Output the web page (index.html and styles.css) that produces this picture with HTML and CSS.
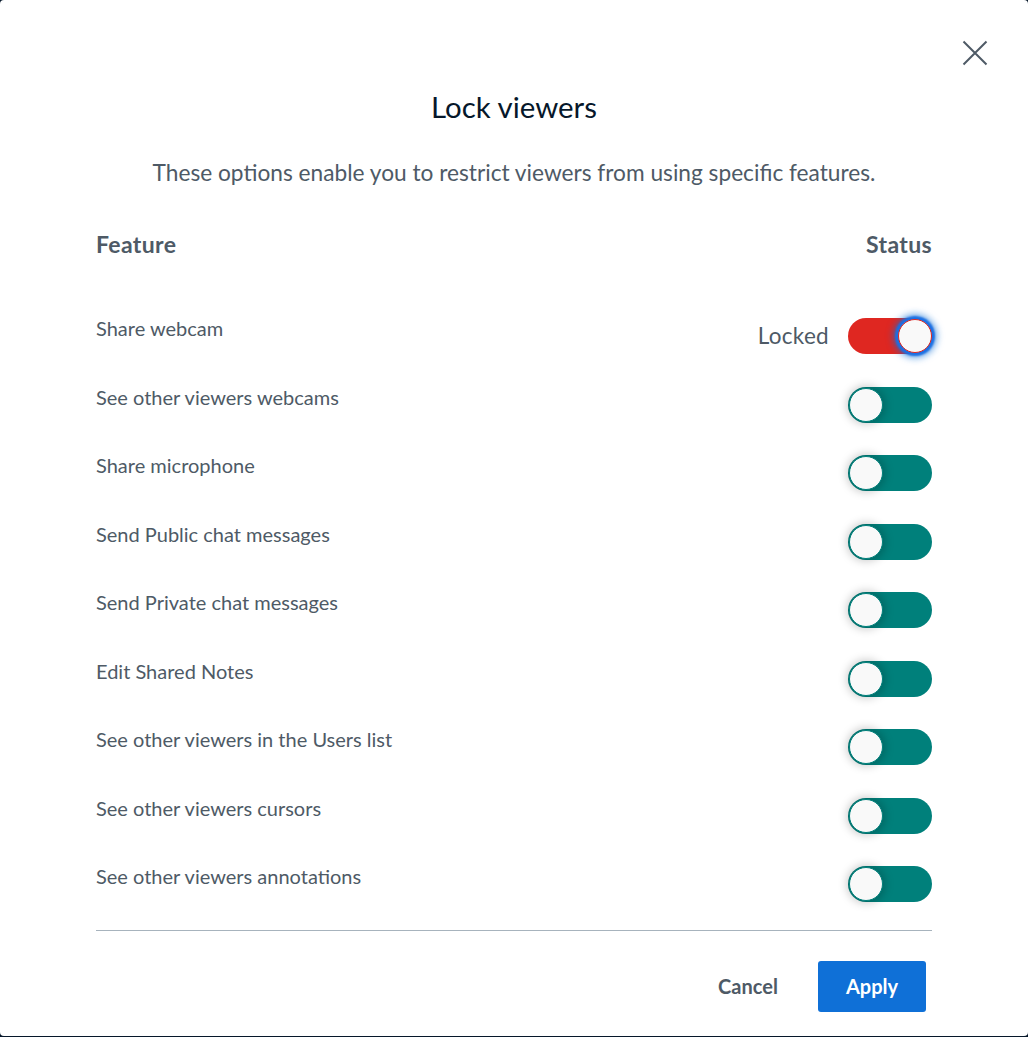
FILE: index.html
```html
<!DOCTYPE html>
<html lang="en">
<head>
<meta charset="utf-8">
<title>Lock viewers</title>
<link rel="stylesheet" href="styles.css">
</head>
<body>
<div class="modal" role="dialog" aria-labelledby="title">
  <button class="close" aria-label="Close">
    <svg width="26" height="26" viewBox="0 0 26 26" aria-hidden="true">
      <path d="M1.5 1.5 L24.5 24.5 M24.5 1.5 L1.5 24.5" stroke="#4e5a66" stroke-width="2" fill="none" stroke-linecap="butt"/>
    </svg>
  </button>
  <h1 class="title" id="title">Lock viewers</h1>
  <p class="subtitle">These options enable you to restrict viewers from using specific features.</p>

  <div class="table">
    <div class="head">
      <span>Feature</span>
      <span>Status</span>
    </div>
    <div class="row">
      <span class="label">Share webcam</span>
      <span class="status"><span class="state">Locked</span><span class="toggle on"><span class="knob"></span></span></span>
    </div>
    <div class="row">
      <span class="label">See other viewers webcams</span>
      <span class="status"><span class="toggle"><span class="knob"></span></span></span>
    </div>
    <div class="row">
      <span class="label">Share microphone</span>
      <span class="status"><span class="toggle"><span class="knob"></span></span></span>
    </div>
    <div class="row">
      <span class="label">Send Public chat messages</span>
      <span class="status"><span class="toggle"><span class="knob"></span></span></span>
    </div>
    <div class="row">
      <span class="label">Send Private chat messages</span>
      <span class="status"><span class="toggle"><span class="knob"></span></span></span>
    </div>
    <div class="row">
      <span class="label">Edit Shared Notes</span>
      <span class="status"><span class="toggle"><span class="knob"></span></span></span>
    </div>
    <div class="row">
      <span class="label">See other viewers in the Users list</span>
      <span class="status"><span class="toggle"><span class="knob"></span></span></span>
    </div>
    <div class="row">
      <span class="label">See other viewers cursors</span>
      <span class="status"><span class="toggle"><span class="knob"></span></span></span>
    </div>
    <div class="row">
      <span class="label">See other viewers annotations</span>
      <span class="status"><span class="toggle"><span class="knob"></span></span></span>
    </div>
  </div>

  <div class="footer">
    <button class="btn cancel">Cancel</button>
    <button class="btn apply">Apply</button>
  </div>
</div>
</body>
</html>
```

FILE: styles.css
```css
html, body {
  margin: 0;
  padding: 0;
}
body {
  background: #06172a;
  font-family: "Lato", "Noto Sans", sans-serif;
  color: #4e5a66;
}
.modal {
  position: relative;
  box-sizing: border-box;
  width: 1028px;
  height: 1036px;
  background: #ffffff;
  border-radius: 4px;
  padding: 86px 96px 0;
}
.close {
  position: absolute;
  top: 40px;
  right: 40px;
  width: 26px;
  height: 26px;
  padding: 0;
  border: 0;
  background: none;
  cursor: pointer;
}
.close svg { display: block; }
.title {
  margin: 0;
  text-align: center;
  font-size: 29.4px;
  line-height: 42px;
  font-weight: 400;
  color: #06172a;
}
.subtitle {
  margin: 30px 0 0;
  text-align: center;
  font-size: 22.7px;
  line-height: 30px;
  color: #4e5a66;
}
.table {
  margin-top: 41px;
}
.head {
  display: flex;
  justify-content: space-between;
  font-size: 23px;
  line-height: 30px;
  font-weight: 700;
  letter-spacing: 0.35px;
  margin-bottom: 54px;
}
.row {
  display: flex;
  justify-content: space-between;
  align-items: flex-start;
  height: 68.5px;
  font-size: 20px;
  line-height: 30px;
}
.status {
  display: flex;
  align-items: center;
  gap: 19px;
  margin-top: 5px;
}
.state {
  font-size: 22.5px;
  letter-spacing: 0.3px;
  line-height: 36px;
}
.toggle {
  position: relative;
  display: block;
  width: 84px;
  height: 36px;
  border-radius: 18px;
  background: #00807b;
}
.toggle.on {
  background: #df2721;
}
.knob {
  position: absolute;
  top: 1px;
  left: 1px;
  width: 32px;
  height: 32px;
  border-radius: 50%;
  background: #f9f9f9;
  border: 1px solid #00807b;
  box-shadow: 0 0 10px 2px rgba(0, 0, 0, 0.22);
}
.toggle.on .knob {
  left: auto;
  right: 0;
  border-color: #df2721;
  box-shadow: 0 0 2px 3px #1b6fe3, 0 0 7px 5px rgba(15, 112, 215, 0.6);
}
.footer {
  display: flex;
  justify-content: flex-end;
  gap: 16px;
  border-top: 1px solid #a7b3bd;
  padding: 30px 6px 0 0;
}
.btn {
  font-family: inherit;
  font-size: 20px;
  font-weight: 700;
  height: 51px;
  width: 108px;
  border: 0;
  border-radius: 3px;
  cursor: pointer;
}
.cancel {
  background: transparent;
  color: #4e5a66;
}
.apply {
  background: #0f70d7;
  color: #ffffff;
}
```
